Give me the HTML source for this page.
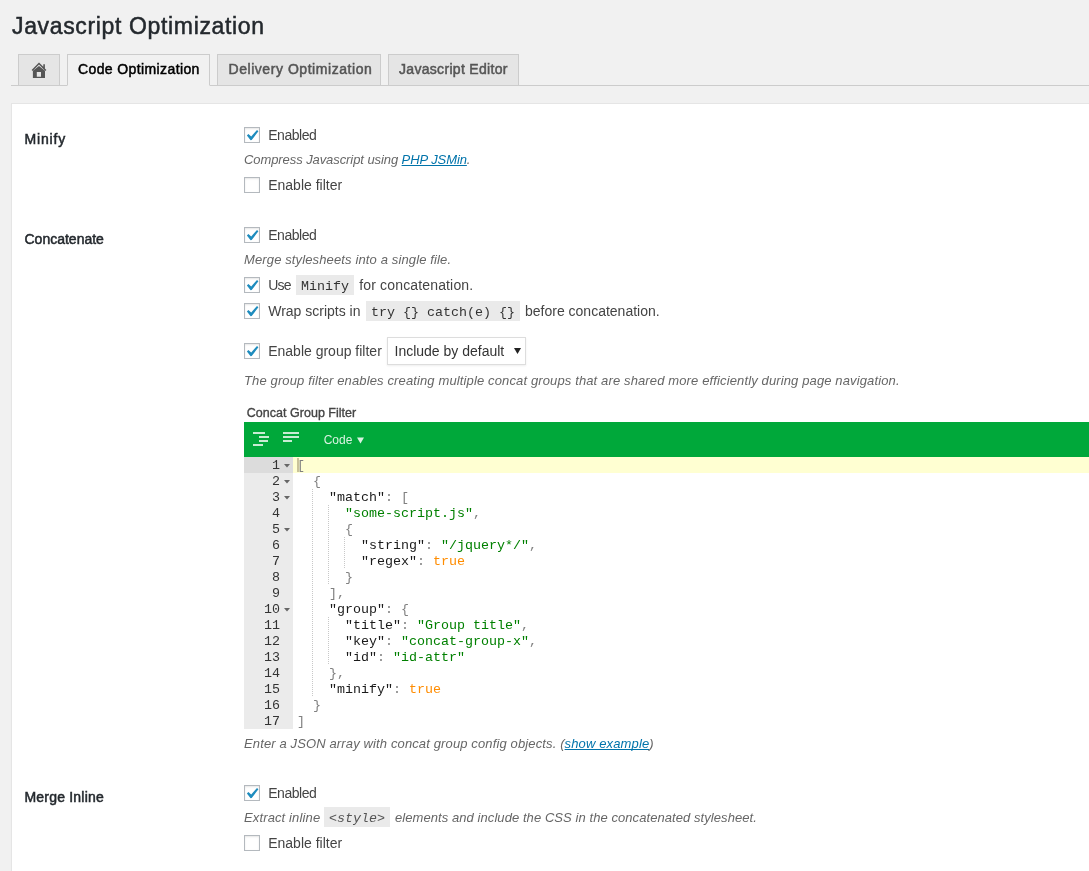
<!DOCTYPE html>
<html><head><meta charset="utf-8"><title>Javascript Optimization</title>
<style>
html,body{margin:0;padding:0;}
body{will-change:transform;width:1089px;height:871px;overflow:hidden;position:relative;background:#f1f1f1;font-family:"Liberation Sans",sans-serif;}
.t{position:absolute;white-space:pre;}
.r{position:absolute;box-sizing:content-box;}
.cb{position:absolute;width:14px;height:14px;border:1px solid #b4b9be;background:#fff;box-shadow:inset 0 1px 2px rgba(0,0,0,.1);}
.cb svg{left:-1px!important;top:-1px!important}
a{color:#0073aa;text-decoration:underline;text-decoration-skip-ink:none;}
</style></head><body>
<div class="t" style="left:12.00px;top:11.53px;font-size:23px;line-height:29px;color:#23282d;font-family:'Liberation Sans', sans-serif;letter-spacing:0.65px;-webkit-text-stroke:0.5px #23282d">Javascript Optimization</div>
<div class="r" style="left:11px;top:85px;width:1100px;height:1px;background:#ccc"></div>
<div class="r" style="left:18px;top:54px;width:40px;height:30px;background:#e5e5e5;border:1px solid #ccc;border-bottom:1px solid #ccc"></div>
<div class="r" style="left:67px;top:54px;width:141px;height:30px;background:#f1f1f1;border:1px solid #ccc;border-bottom:1px solid #f1f1f1"></div>
<div class="r" style="left:217px;top:54px;width:162px;height:30px;background:#e5e5e5;border:1px solid #ccc;border-bottom:1px solid #ccc"></div>
<div class="r" style="left:388px;top:54px;width:129px;height:30px;background:#e5e5e5;border:1px solid #ccc;border-bottom:1px solid #ccc"></div>
<svg class="r" style="left:31px;top:62px" width="16" height="16" viewBox="0 0 16 16"><path d="M8 0.4 L0.6 7.9 L1.7 9 L8 2.6 L14.3 9 L15.4 7.9 L13.9 6.4 L13.9 2.3 L12.3 2.3 L12.3 4.8 Z" fill="#555"/><path fill-rule="evenodd" d="M1.9 8.7 L8 3.9 L14 8.7 L14 16 L1.9 16 Z M5.8 10.1 L10 10.1 L10 14.8 L5.8 14.8 Z" fill="#555"/></svg>
<div class="t" style="left:78.00px;top:60.15px;font-size:14px;line-height:18px;color:#000;font-family:'Liberation Sans', sans-serif;letter-spacing:0.39px;-webkit-text-stroke:0.5px #000">Code Optimization</div>
<div class="t" style="left:228.50px;top:60.15px;font-size:14px;line-height:18px;color:#555;font-family:'Liberation Sans', sans-serif;letter-spacing:0.55px;-webkit-text-stroke:0.5px #555">Delivery Optimization</div>
<div class="t" style="left:399.00px;top:60.15px;font-size:14px;line-height:18px;color:#555;font-family:'Liberation Sans', sans-serif;letter-spacing:0.31px;-webkit-text-stroke:0.5px #555">Javascript Editor</div>
<div class="r" style="left:11px;top:103px;width:1100px;height:800px;background:#fff;border:1px solid #e5e5e5;box-shadow:0 1px 1px rgba(0,0,0,.04)"></div>
<div class="t" style="left:24.50px;top:130.15px;font-size:14px;line-height:18px;color:#23282d;font-family:'Liberation Sans', sans-serif;letter-spacing:0.85px;-webkit-text-stroke:0.5px #23282d">Minify</div>
<div class="cb" style="left:244px;top:127px"><svg width="16" height="16" viewBox="0 0 16 16" style="position:absolute;left:0;top:0"><path d="M2.9 8.6 L4.4 7.0 L7.2 9.4 L13.0 2.9 L14.4 4.3 L7.7 13.1 L6.6 13.3 Z" fill="#1e8cbe"/></svg></div>
<div class="t" style="left:268.20px;top:126.15px;font-size:14px;line-height:18px;color:#444;font-family:'Liberation Sans', sans-serif;letter-spacing:-0.45px">Enabled</div>
<div class="t" style="left:244.00px;top:152.19px;font-size:13px;line-height:16px;color:#666;font-family:'Liberation Sans', sans-serif;font-style:italic;letter-spacing:-0.08px">Compress Javascript using <a>PHP JSMin</a>.</div>
<div class="cb" style="left:244px;top:177px"></div>
<div class="t" style="left:268.20px;top:176.15px;font-size:14px;line-height:18px;color:#444;font-family:'Liberation Sans', sans-serif">Enable filter</div>
<div class="t" style="left:24.50px;top:230.15px;font-size:14px;line-height:18px;color:#23282d;font-family:'Liberation Sans', sans-serif;-webkit-text-stroke:0.5px #23282d">Concatenate</div>
<div class="cb" style="left:244px;top:227px"><svg width="16" height="16" viewBox="0 0 16 16" style="position:absolute;left:0;top:0"><path d="M2.9 8.6 L4.4 7.0 L7.2 9.4 L13.0 2.9 L14.4 4.3 L7.7 13.1 L6.6 13.3 Z" fill="#1e8cbe"/></svg></div>
<div class="t" style="left:268.20px;top:226.15px;font-size:14px;line-height:18px;color:#444;font-family:'Liberation Sans', sans-serif;letter-spacing:-0.45px">Enabled</div>
<div class="t" style="left:244.00px;top:252.19px;font-size:13px;line-height:16px;color:#666;font-family:'Liberation Sans', sans-serif;font-style:italic;letter-spacing:0.13px">Merge stylesheets into a single file.</div>
<div class="cb" style="left:244px;top:277px"><svg width="16" height="16" viewBox="0 0 16 16" style="position:absolute;left:0;top:0"><path d="M2.9 8.6 L4.4 7.0 L7.2 9.4 L13.0 2.9 L14.4 4.3 L7.7 13.1 L6.6 13.3 Z" fill="#1e8cbe"/></svg></div>
<div class="t" style="left:268.20px;top:276.15px;font-size:14px;line-height:18px;color:#444;font-family:'Liberation Sans', sans-serif;letter-spacing:-0.8px">Use</div>
<div class="r" style="left:296px;top:275px;width:58px;height:20px;background:#eaeaea"></div>
<div class="t" style="left:301.00px;top:277.95px;font-size:13.33px;line-height:17px;color:#333;font-family:'Liberation Mono', monospace">Minify</div>
<div class="t" style="left:359.30px;top:276.15px;font-size:14px;line-height:18px;color:#444;font-family:'Liberation Sans', sans-serif;letter-spacing:0.15px">for concatenation.</div>
<div class="cb" style="left:244px;top:303px"><svg width="16" height="16" viewBox="0 0 16 16" style="position:absolute;left:0;top:0"><path d="M2.9 8.6 L4.4 7.0 L7.2 9.4 L13.0 2.9 L14.4 4.3 L7.7 13.1 L6.6 13.3 Z" fill="#1e8cbe"/></svg></div>
<div class="t" style="left:268.20px;top:302.15px;font-size:14px;line-height:18px;color:#444;font-family:'Liberation Sans', sans-serif">Wrap scripts in</div>
<div class="r" style="left:366px;top:301px;width:154px;height:20px;background:#eaeaea"></div>
<div class="t" style="left:371.00px;top:303.95px;font-size:13.33px;line-height:17px;color:#333;font-family:'Liberation Mono', monospace">try {} catch(e) {}</div>
<div class="t" style="left:525.00px;top:302.15px;font-size:14px;line-height:18px;color:#444;font-family:'Liberation Sans', sans-serif">before concatenation.</div>
<div class="cb" style="left:244px;top:343px"><svg width="16" height="16" viewBox="0 0 16 16" style="position:absolute;left:0;top:0"><path d="M2.9 8.6 L4.4 7.0 L7.2 9.4 L13.0 2.9 L14.4 4.3 L7.7 13.1 L6.6 13.3 Z" fill="#1e8cbe"/></svg></div>
<div class="t" style="left:268.20px;top:342.15px;font-size:14px;line-height:18px;color:#444;font-family:'Liberation Sans', sans-serif">Enable group filter</div>
<div class="r" style="left:387px;top:337px;width:137px;height:26px;background:#fff;border:1px solid #ddd;box-shadow:0 1px 2px rgba(0,0,0,.07)"></div>
<div class="t" style="left:394.50px;top:342.15px;font-size:14px;line-height:18px;color:#333;font-family:'Liberation Sans', sans-serif">Include by default</div>
<svg class="r" style="left:514px;top:348px" width="7" height="6" viewBox="0 0 7 6"><path d="M0 0 L7 0 L3.5 6 Z" fill="#222"/></svg>
<div class="t" style="left:244.00px;top:373.19px;font-size:13px;line-height:16px;color:#666;font-family:'Liberation Sans', sans-serif;font-style:italic;letter-spacing:0.13px">The group filter enables creating multiple concat groups that are shared more efficiently during page navigation.</div>
<div class="t" style="left:246.80px;top:405.17px;font-size:12.5px;line-height:16px;color:#444;font-family:'Liberation Sans', sans-serif;letter-spacing:0.02px;-webkit-text-stroke:0.35px #444">Concat Group Filter</div>
<div class="r" style="left:244px;top:422px;width:900px;height:35px;background:#00a83a"></div>
<div class="r" style="left:253px;top:432px;width:12px;height:2px;background:rgba(255,255,255,.78)"></div>
<div class="r" style="left:259px;top:436px;width:10px;height:2px;background:rgba(255,255,255,.78)"></div>
<div class="r" style="left:259px;top:440px;width:9px;height:2px;background:rgba(255,255,255,.78)"></div>
<div class="r" style="left:253px;top:444px;width:10px;height:2px;background:rgba(255,255,255,.78)"></div>
<div class="r" style="left:283px;top:432px;width:16px;height:2px;background:rgba(255,255,255,.78)"></div>
<div class="r" style="left:283px;top:436px;width:16px;height:2px;background:rgba(255,255,255,.78)"></div>
<div class="r" style="left:283px;top:440px;width:9px;height:2px;background:rgba(255,255,255,.78)"></div>
<div class="t" style="left:323.70px;top:432.94px;font-size:12px;line-height:15px;color:rgba(255,255,255,.85);font-family:'Liberation Sans', sans-serif">Code</div>
<svg class="r" style="left:357px;top:437px" width="7" height="7" viewBox="0 0 7 7"><path d="M0 0.5 L7 0.5 L3.5 6.5 Z" fill="rgba(255,255,255,.85)"/></svg>
<div class="r" style="left:244px;top:457px;width:49px;height:272px;background:#ebebeb"></div>
<div class="r" style="left:244px;top:457px;width:49px;height:16px;background:#dcdcdc"></div>
<div class="r" style="left:293px;top:457px;width:900px;height:16px;background:#ffffd2"></div>
<div class="r" style="left:297px;top:458px;width:2px;height:14px;background:#c9c39b"></div>
<div class="t" style="left:272.00px;top:457.35px;font-size:13.33px;line-height:17px;color:#333;font-family:'Liberation Mono', monospace">1</div>
<svg class="r" style="left:284px;top:464px" width="6" height="4" viewBox="0 0 6 4"><path d="M0 0 L6 0 L3 3.5 Z" fill="#666"/></svg>
<div class="t" style="left:297.00px;top:457.35px;font-size:13.33px;line-height:17px;color:#444;font-family:'Liberation Mono', monospace"><span style="color:#808080">[</span></div>
<div class="t" style="left:272.00px;top:473.35px;font-size:13.33px;line-height:17px;color:#333;font-family:'Liberation Mono', monospace">2</div>
<svg class="r" style="left:284px;top:480px" width="6" height="4" viewBox="0 0 6 4"><path d="M0 0 L6 0 L3 3.5 Z" fill="#666"/></svg>
<div class="t" style="left:313.00px;top:473.35px;font-size:13.33px;line-height:17px;color:#444;font-family:'Liberation Mono', monospace"><span style="color:#808080">{</span></div>
<div class="t" style="left:272.00px;top:489.35px;font-size:13.33px;line-height:17px;color:#333;font-family:'Liberation Mono', monospace">3</div>
<svg class="r" style="left:284px;top:496px" width="6" height="4" viewBox="0 0 6 4"><path d="M0 0 L6 0 L3 3.5 Z" fill="#666"/></svg>
<div class="t" style="left:329.00px;top:489.35px;font-size:13.33px;line-height:17px;color:#444;font-family:'Liberation Mono', monospace"><span style="color:#1a1a1a">"match"</span><span style="color:#808080">: [</span></div>
<div class="t" style="left:272.00px;top:505.35px;font-size:13.33px;line-height:17px;color:#333;font-family:'Liberation Mono', monospace">4</div>
<div class="t" style="left:345.00px;top:505.35px;font-size:13.33px;line-height:17px;color:#444;font-family:'Liberation Mono', monospace"><span style="color:#008000">"some-script.js"</span><span style="color:#808080">,</span></div>
<div class="t" style="left:272.00px;top:521.35px;font-size:13.33px;line-height:17px;color:#333;font-family:'Liberation Mono', monospace">5</div>
<svg class="r" style="left:284px;top:528px" width="6" height="4" viewBox="0 0 6 4"><path d="M0 0 L6 0 L3 3.5 Z" fill="#666"/></svg>
<div class="t" style="left:345.00px;top:521.35px;font-size:13.33px;line-height:17px;color:#444;font-family:'Liberation Mono', monospace"><span style="color:#808080">{</span></div>
<div class="t" style="left:272.00px;top:537.35px;font-size:13.33px;line-height:17px;color:#333;font-family:'Liberation Mono', monospace">6</div>
<div class="t" style="left:361.00px;top:537.35px;font-size:13.33px;line-height:17px;color:#444;font-family:'Liberation Mono', monospace"><span style="color:#1a1a1a">"string"</span><span style="color:#808080">: </span><span style="color:#008000">"/jquery*/"</span><span style="color:#808080">,</span></div>
<div class="t" style="left:272.00px;top:553.35px;font-size:13.33px;line-height:17px;color:#333;font-family:'Liberation Mono', monospace">7</div>
<div class="t" style="left:361.00px;top:553.35px;font-size:13.33px;line-height:17px;color:#444;font-family:'Liberation Mono', monospace"><span style="color:#1a1a1a">"regex"</span><span style="color:#808080">: </span><span style="color:#ff8c00">true</span></div>
<div class="t" style="left:272.00px;top:569.35px;font-size:13.33px;line-height:17px;color:#333;font-family:'Liberation Mono', monospace">8</div>
<div class="t" style="left:345.00px;top:569.35px;font-size:13.33px;line-height:17px;color:#444;font-family:'Liberation Mono', monospace"><span style="color:#808080">}</span></div>
<div class="t" style="left:272.00px;top:585.35px;font-size:13.33px;line-height:17px;color:#333;font-family:'Liberation Mono', monospace">9</div>
<div class="t" style="left:329.00px;top:585.35px;font-size:13.33px;line-height:17px;color:#444;font-family:'Liberation Mono', monospace"><span style="color:#808080">],</span></div>
<div class="t" style="left:264.00px;top:601.35px;font-size:13.33px;line-height:17px;color:#333;font-family:'Liberation Mono', monospace">10</div>
<svg class="r" style="left:284px;top:608px" width="6" height="4" viewBox="0 0 6 4"><path d="M0 0 L6 0 L3 3.5 Z" fill="#666"/></svg>
<div class="t" style="left:329.00px;top:601.35px;font-size:13.33px;line-height:17px;color:#444;font-family:'Liberation Mono', monospace"><span style="color:#1a1a1a">"group"</span><span style="color:#808080">: {</span></div>
<div class="t" style="left:264.00px;top:617.35px;font-size:13.33px;line-height:17px;color:#333;font-family:'Liberation Mono', monospace">11</div>
<div class="t" style="left:345.00px;top:617.35px;font-size:13.33px;line-height:17px;color:#444;font-family:'Liberation Mono', monospace"><span style="color:#1a1a1a">"title"</span><span style="color:#808080">: </span><span style="color:#008000">"Group title"</span><span style="color:#808080">,</span></div>
<div class="t" style="left:264.00px;top:633.35px;font-size:13.33px;line-height:17px;color:#333;font-family:'Liberation Mono', monospace">12</div>
<div class="t" style="left:345.00px;top:633.35px;font-size:13.33px;line-height:17px;color:#444;font-family:'Liberation Mono', monospace"><span style="color:#1a1a1a">"key"</span><span style="color:#808080">: </span><span style="color:#008000">"concat-group-x"</span><span style="color:#808080">,</span></div>
<div class="t" style="left:264.00px;top:649.35px;font-size:13.33px;line-height:17px;color:#333;font-family:'Liberation Mono', monospace">13</div>
<div class="t" style="left:345.00px;top:649.35px;font-size:13.33px;line-height:17px;color:#444;font-family:'Liberation Mono', monospace"><span style="color:#1a1a1a">"id"</span><span style="color:#808080">: </span><span style="color:#008000">"id-attr"</span></div>
<div class="t" style="left:264.00px;top:665.35px;font-size:13.33px;line-height:17px;color:#333;font-family:'Liberation Mono', monospace">14</div>
<div class="t" style="left:329.00px;top:665.35px;font-size:13.33px;line-height:17px;color:#444;font-family:'Liberation Mono', monospace"><span style="color:#808080">},</span></div>
<div class="t" style="left:264.00px;top:681.35px;font-size:13.33px;line-height:17px;color:#333;font-family:'Liberation Mono', monospace">15</div>
<div class="t" style="left:329.00px;top:681.35px;font-size:13.33px;line-height:17px;color:#444;font-family:'Liberation Mono', monospace"><span style="color:#1a1a1a">"minify"</span><span style="color:#808080">: </span><span style="color:#ff8c00">true</span></div>
<div class="t" style="left:264.00px;top:697.35px;font-size:13.33px;line-height:17px;color:#333;font-family:'Liberation Mono', monospace">16</div>
<div class="t" style="left:313.00px;top:697.35px;font-size:13.33px;line-height:17px;color:#444;font-family:'Liberation Mono', monospace"><span style="color:#808080">}</span></div>
<div class="t" style="left:264.00px;top:713.35px;font-size:13.33px;line-height:17px;color:#333;font-family:'Liberation Mono', monospace">17</div>
<div class="t" style="left:297.00px;top:713.35px;font-size:13.33px;line-height:17px;color:#444;font-family:'Liberation Mono', monospace"><span style="color:#808080">]</span></div>
<div class="r" style="left:311.5px;top:489px;width:1px;height:16px;background:repeating-linear-gradient(#bbb 0 1px, transparent 1px 2px);opacity:.8"></div>
<div class="r" style="left:311.5px;top:505px;width:1px;height:16px;background:repeating-linear-gradient(#bbb 0 1px, transparent 1px 2px);opacity:.8"></div>
<div class="r" style="left:311.5px;top:521px;width:1px;height:16px;background:repeating-linear-gradient(#bbb 0 1px, transparent 1px 2px);opacity:.8"></div>
<div class="r" style="left:311.5px;top:537px;width:1px;height:16px;background:repeating-linear-gradient(#bbb 0 1px, transparent 1px 2px);opacity:.8"></div>
<div class="r" style="left:311.5px;top:553px;width:1px;height:16px;background:repeating-linear-gradient(#bbb 0 1px, transparent 1px 2px);opacity:.8"></div>
<div class="r" style="left:311.5px;top:569px;width:1px;height:16px;background:repeating-linear-gradient(#bbb 0 1px, transparent 1px 2px);opacity:.8"></div>
<div class="r" style="left:311.5px;top:585px;width:1px;height:16px;background:repeating-linear-gradient(#bbb 0 1px, transparent 1px 2px);opacity:.8"></div>
<div class="r" style="left:311.5px;top:601px;width:1px;height:16px;background:repeating-linear-gradient(#bbb 0 1px, transparent 1px 2px);opacity:.8"></div>
<div class="r" style="left:311.5px;top:617px;width:1px;height:16px;background:repeating-linear-gradient(#bbb 0 1px, transparent 1px 2px);opacity:.8"></div>
<div class="r" style="left:311.5px;top:633px;width:1px;height:16px;background:repeating-linear-gradient(#bbb 0 1px, transparent 1px 2px);opacity:.8"></div>
<div class="r" style="left:311.5px;top:649px;width:1px;height:16px;background:repeating-linear-gradient(#bbb 0 1px, transparent 1px 2px);opacity:.8"></div>
<div class="r" style="left:311.5px;top:665px;width:1px;height:16px;background:repeating-linear-gradient(#bbb 0 1px, transparent 1px 2px);opacity:.8"></div>
<div class="r" style="left:311.5px;top:681px;width:1px;height:16px;background:repeating-linear-gradient(#bbb 0 1px, transparent 1px 2px);opacity:.8"></div>
<div class="r" style="left:327.5px;top:505px;width:1px;height:16px;background:repeating-linear-gradient(#bbb 0 1px, transparent 1px 2px);opacity:.8"></div>
<div class="r" style="left:327.5px;top:521px;width:1px;height:16px;background:repeating-linear-gradient(#bbb 0 1px, transparent 1px 2px);opacity:.8"></div>
<div class="r" style="left:327.5px;top:537px;width:1px;height:16px;background:repeating-linear-gradient(#bbb 0 1px, transparent 1px 2px);opacity:.8"></div>
<div class="r" style="left:327.5px;top:553px;width:1px;height:16px;background:repeating-linear-gradient(#bbb 0 1px, transparent 1px 2px);opacity:.8"></div>
<div class="r" style="left:327.5px;top:569px;width:1px;height:16px;background:repeating-linear-gradient(#bbb 0 1px, transparent 1px 2px);opacity:.8"></div>
<div class="r" style="left:327.5px;top:617px;width:1px;height:16px;background:repeating-linear-gradient(#bbb 0 1px, transparent 1px 2px);opacity:.8"></div>
<div class="r" style="left:327.5px;top:633px;width:1px;height:16px;background:repeating-linear-gradient(#bbb 0 1px, transparent 1px 2px);opacity:.8"></div>
<div class="r" style="left:327.5px;top:649px;width:1px;height:16px;background:repeating-linear-gradient(#bbb 0 1px, transparent 1px 2px);opacity:.8"></div>
<div class="r" style="left:343.5px;top:537px;width:1px;height:16px;background:repeating-linear-gradient(#bbb 0 1px, transparent 1px 2px);opacity:.8"></div>
<div class="r" style="left:343.5px;top:553px;width:1px;height:16px;background:repeating-linear-gradient(#bbb 0 1px, transparent 1px 2px);opacity:.8"></div>
<div class="t" style="left:244.00px;top:736.19px;font-size:13px;line-height:16px;color:#666;font-family:'Liberation Sans', sans-serif;font-style:italic;letter-spacing:0.13px">Enter a JSON array with concat group config objects. (<a>show example</a>)</div>
<div class="t" style="left:24.50px;top:788.15px;font-size:14px;line-height:18px;color:#23282d;font-family:'Liberation Sans', sans-serif;letter-spacing:0.2px;-webkit-text-stroke:0.5px #23282d">Merge Inline</div>
<div class="cb" style="left:244px;top:785px"><svg width="16" height="16" viewBox="0 0 16 16" style="position:absolute;left:0;top:0"><path d="M2.9 8.6 L4.4 7.0 L7.2 9.4 L13.0 2.9 L14.4 4.3 L7.7 13.1 L6.6 13.3 Z" fill="#1e8cbe"/></svg></div>
<div class="t" style="left:268.20px;top:784.15px;font-size:14px;line-height:18px;color:#444;font-family:'Liberation Sans', sans-serif;letter-spacing:-0.45px">Enabled</div>
<div class="t" style="left:244.00px;top:810.19px;font-size:13px;line-height:16px;color:#666;font-family:'Liberation Sans', sans-serif;font-style:italic;letter-spacing:0.13px">Extract inline</div>
<div class="r" style="left:324px;top:807px;width:66px;height:20px;background:#eaeaea"></div>
<div class="t" style="left:329.00px;top:809.95px;font-size:13.33px;line-height:17px;color:#555;font-family:'Liberation Mono', monospace;font-style:italic">&lt;style&gt;</div>
<div class="t" style="left:395.00px;top:810.19px;font-size:13px;line-height:16px;color:#666;font-family:'Liberation Sans', sans-serif;font-style:italic;letter-spacing:0.07px">elements and include the CSS in the concatenated stylesheet.</div>
<div class="cb" style="left:244px;top:835px"></div>
<div class="t" style="left:268.20px;top:834.15px;font-size:14px;line-height:18px;color:#444;font-family:'Liberation Sans', sans-serif">Enable filter</div>
</body></html>
